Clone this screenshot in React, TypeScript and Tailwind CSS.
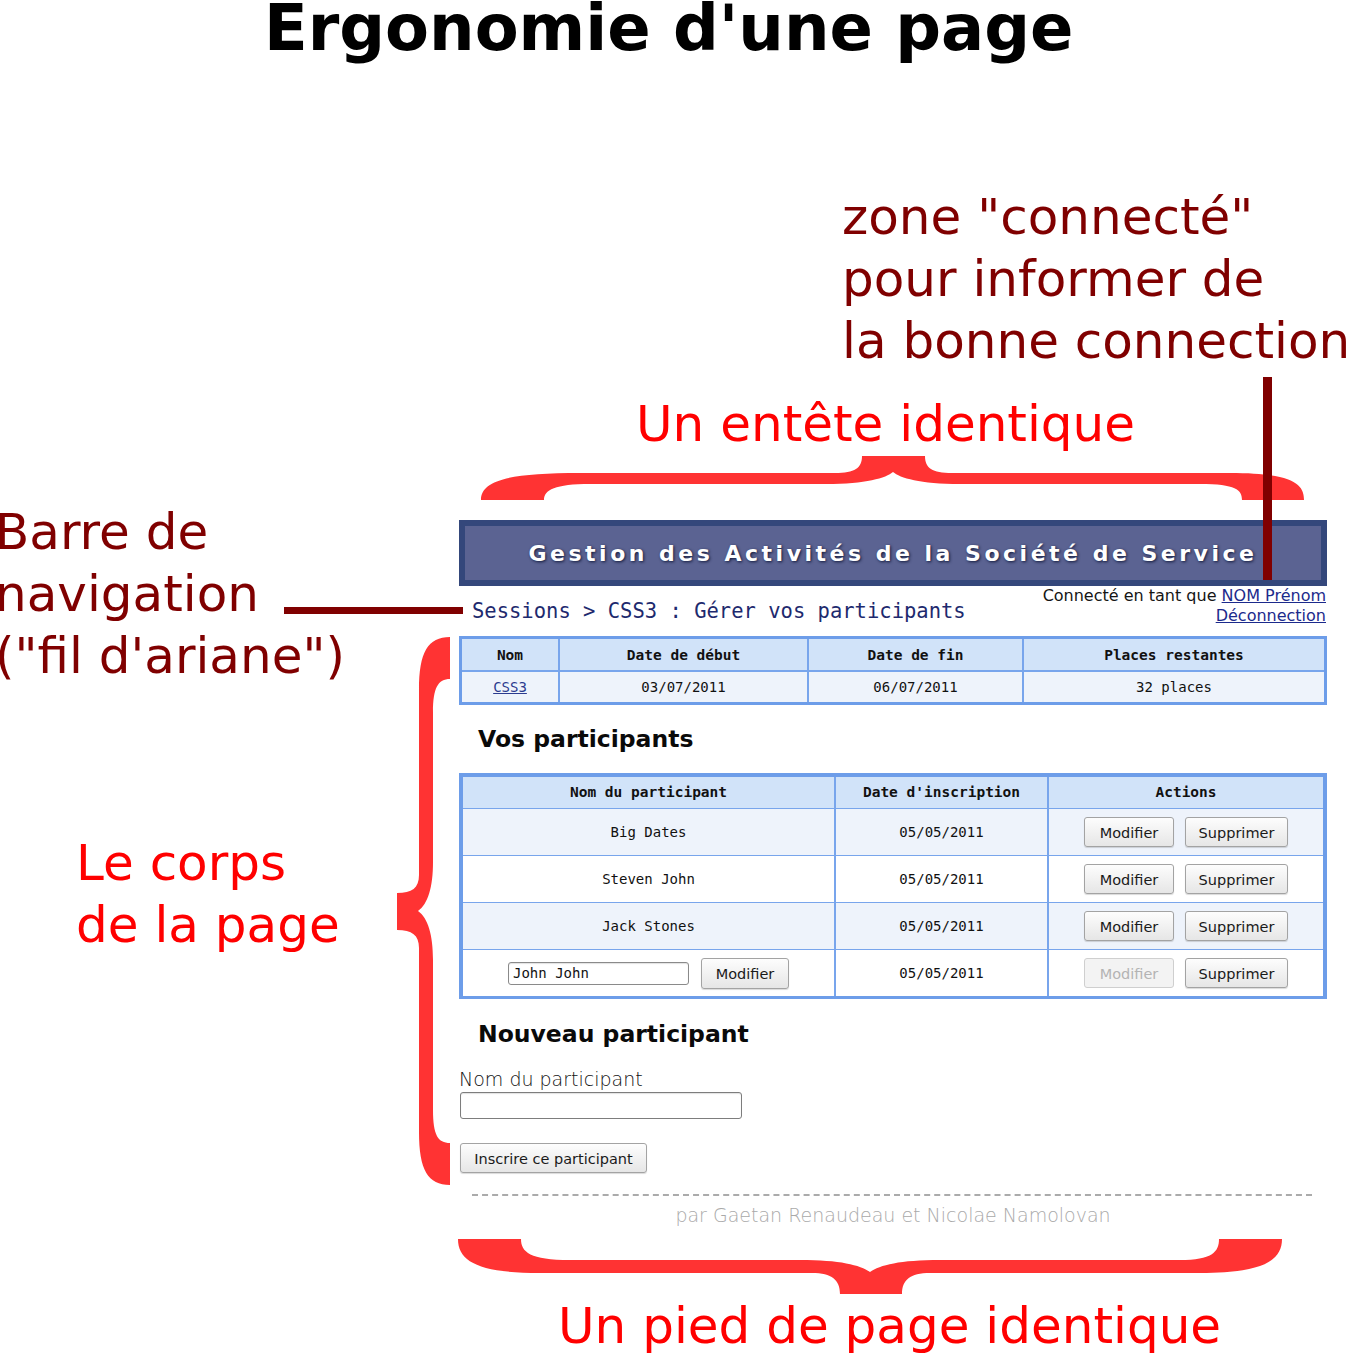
import React from 'react'

function Btn({
  children,
  disabled,
  className = '',
}: {
  children: React.ReactNode
  disabled?: boolean
  className?: string
}) {
  return (
    <button
      className={`flex items-center justify-center rounded-[3px] border font-['DejaVu_Sans',sans-serif] text-[14.5px] leading-none pt-[2px] ${
        disabled
          ? 'border-[#cfcfcf] bg-[#f3f3f3] text-[#b4b4b4]'
          : 'border-[#a3a3a3] bg-gradient-to-b from-[#fdfdfd] to-[#e6e6e6] text-[#1a1a1a] shadow-[0_1px_1px_rgba(0,0,0,0.15)]'
      } ${className}`}
    >
      {children}
    </button>
  )
}

const participants = [
  { name: 'Big Dates', date: '05/05/2011', bg: 'bg-[#eef3fb]' },
  { name: 'Steven John', date: '05/05/2011', bg: 'bg-white' },
  { name: 'Jack Stones', date: '05/05/2011', bg: 'bg-[#eef3fb]' },
]

function PageMockup() {
  return (
    <div className="absolute left-[459px] top-[520px] w-[868px] flex flex-col">
      {/* Header */}
      <div className="h-[66px] border-[6px] border-[#34477b] bg-[#5b6392] flex items-center justify-center">
        <span className="font-['DejaVu_Sans',sans-serif] font-bold text-[22px] leading-none tracking-[3.5px] text-white [text-shadow:1px_1px_3px_#10183a] pt-[1px]">
          Gestion des Activités de la Société de Service
        </span>
      </div>

      {/* Breadcrumb + connected zone */}
      <div className="h-[50px] flex justify-between items-start">
        <div className="pl-[13px] pt-[13px] font-['DejaVu_Sans_Mono',monospace] text-[20.5px] leading-[24px] text-[#1e2a6e]">
          Sessions &gt; CSS3 : Gérer vos participants
        </div>
        <div className="pr-[1px] text-right font-['DejaVu_Sans',sans-serif] text-[16px] leading-[20px] text-[#151515]">
          <div>
            Connecté en tant que <span className="underline text-[#1c2a8c]">NOM Prénom</span>
          </div>
          <div className="underline text-[#1c2a8c]">Déconnection</div>
        </div>
      </div>

      {/* Session table */}
      <div className="grid grid-cols-[96px_247px_213px_1fr] gap-[2px] border-[3px] border-[#6d9de9] bg-[#78a5ec] font-['DejaVu_Sans_Mono',monospace] text-[14px] text-[#111]">
        {['Nom', 'Date de début', 'Date de fin', 'Places restantes'].map((h) => (
          <div key={h} className="h-[31px] bg-[#d1e3f9] flex items-center justify-center font-bold text-[14.5px] pt-[2px]">
            {h}
          </div>
        ))}
        <div className="h-[30px] bg-[#eef3fb] flex items-center justify-center">
          <span className="underline text-[#2b3b8f]">CSS3</span>
        </div>
        <div className="h-[30px] bg-[#eef3fb] flex items-center justify-center">03/07/2011</div>
        <div className="h-[30px] bg-[#eef3fb] flex items-center justify-center">06/07/2011</div>
        <div className="h-[30px] bg-[#eef3fb] flex items-center justify-center">32 places</div>
      </div>

      {/* Vos participants */}
      <h2 className="mt-[20px] pl-[19px] font-['DejaVu_Sans',sans-serif] font-bold text-[23.5px] leading-[28px] text-[#0a0a0a]">
        Vos participants
      </h2>

      <div className="mt-[20px] grid grid-cols-[371px_211px_1fr] gap-x-[2px] gap-y-[1px] border-x-4 border-t-4 border-b-[3px] border-[#6d9de9] bg-[#78a5ec] font-['DejaVu_Sans_Mono',monospace] text-[14px] text-[#111]">
        {['Nom du participant', "Date d'inscription", 'Actions'].map((h) => (
          <div key={h} className="h-[31px] bg-[#d1e3f9] flex items-center justify-center font-bold text-[14.5px] pt-[1px]">
            {h}
          </div>
        ))}
        {participants.map((p) => (
          <React.Fragment key={p.name}>
            <div className={`h-[46px] ${p.bg} flex items-center justify-center`}>{p.name}</div>
            <div className={`h-[46px] ${p.bg} flex items-center justify-center`}>{p.date}</div>
            <div className={`h-[46px] ${p.bg} flex items-center justify-center gap-[11px]`}>
              <Btn className="w-[90px] h-[30px]">Modifier</Btn>
              <Btn className="w-[103px] h-[30px]">Supprimer</Btn>
            </div>
          </React.Fragment>
        ))}
        <div className="h-[46px] bg-white flex items-center justify-center gap-[12px]">
          <div className="w-[181px] h-[23px] rounded-[3px] border border-[#8a8a8a] bg-white pl-[4px] flex items-center shadow-[inset_0_1px_1px_rgba(0,0,0,0.12)]">
            John John
          </div>
          <Btn className="w-[88px] h-[31px]">Modifier</Btn>
        </div>
        <div className="h-[46px] bg-white flex items-center justify-center">05/05/2011</div>
        <div className="h-[46px] bg-white flex items-center justify-center gap-[11px]">
          <Btn disabled className="w-[90px] h-[30px]">
            Modifier
          </Btn>
          <Btn className="w-[103px] h-[30px]">Supprimer</Btn>
        </div>
      </div>

      {/* Nouveau participant */}
      <h2 className="mt-[21px] pl-[19px] font-['DejaVu_Sans',sans-serif] font-bold text-[23.5px] leading-[28px] text-[#0a0a0a]">
        Nouveau participant
      </h2>
      <label className="mt-[20px] font-['DejaVu_Sans',sans-serif] font-extralight text-[19px] leading-[22px] text-[#111]">
        Nom du participant
      </label>
      <div className="mt-[2px] ml-[1px] w-[282px] h-[27px] rounded-[3px] border border-[#7d7d7d] bg-white shadow-[inset_0_1px_1px_rgba(0,0,0,0.12)]" />
      <Btn className="mt-[24px] ml-[1px] w-[187px] h-[30px]">Inscrire ce participant</Btn>

      {/* Footer */}
      <div className="mt-[21px] ml-[13px] mr-[15px] border-t-2 border-dashed border-[#ababab]" />
      <div className="mt-[8px] text-center font-['DejaVu_Sans',sans-serif] font-extralight text-[19px] leading-[22px] text-[#a9a9a9]">
        par Gaetan Renaudeau et Nicolae Namolovan
      </div>
    </div>
  )
}

function Annotations() {
  return (
    <svg className="absolute inset-0 pointer-events-none" width="1346" height="1353" viewBox="0 0 1346 1353">
      {/* top brace */}
      <path
        fill="#ff3333"
        d="M481,500 C481,480 510,473 580,473 L835,473 C855,473 862,468 862,456 L925,456 C925,468 932,473 952,473 L1230,473 C1295,473 1304,485 1304,500 L1242,500 C1242,490 1236,484 1200,484 L960,484 C920,484 900,478 893,472 C886,478 866,484 826,484 L590,484 C555,484 544,490 544,500 Z"
      />
      {/* left brace */}
      <path
        fill="#ff3333"
        d="M450,637 C428,637 419,652 419,690 L419,875 C419,888 412,893 397,893 L397,930 C412,930 419,935 419,948 L419,1132 C419,1170 428,1185 450,1185 L450,1143 C438,1143 433,1135 433,1110 L433,960 C433,935 428,918 418,911 C428,904 433,887 433,862 L433,712 C433,688 438,679 450,679 Z"
      />
      {/* bottom brace */}
      <path
        fill="#ff3333"
        d="M458,1239 L521,1239 C521,1252 530,1260 570,1260 L800,1260 C840,1260 860,1265 870,1272 C880,1265 900,1260 940,1260 L1180,1260 C1212,1260 1219,1252 1219,1239 L1282,1239 C1282,1262 1260,1273 1200,1273 L930,1273 C910,1273 902,1280 902,1294 L840,1294 C840,1280 832,1273 812,1273 L540,1273 C480,1273 458,1262 458,1239 Z"
      />
      {/* dark red pointers */}
      <rect x="1263" y="377" width="9" height="203" fill="#800000" />
      <rect x="284" y="607" width="179" height="7" fill="#800000" />
    </svg>
  )
}

export default function App() {
  return (
    <div className="relative w-[1346px] h-[1353px] bg-white overflow-hidden font-['DejaVu_Sans',sans-serif]">
      <h1 className="absolute left-[264px] top-[-4px] font-bold text-[64px] leading-[64px] text-black whitespace-nowrap">
        Ergonomie d'une page
      </h1>

      <div className="absolute left-[842px] top-[186px] text-[50px] leading-[62px] text-[#800000] whitespace-nowrap">
        <div>zone "connecté"</div>
        <div>pour informer de</div>
        <div>la bonne connection</div>
      </div>

      <div className="absolute left-[636px] top-[393px] text-[50px] leading-[62px] text-[#ff0000] whitespace-nowrap">
        Un entête identique
      </div>

      <div className="absolute left-[-5px] top-[501px] text-[50px] leading-[62px] text-[#800000] whitespace-nowrap">
        <div>Barre de</div>
        <div>navigation</div>
        <div>("fil d'ariane")</div>
      </div>

      <div className="absolute left-[76px] top-[832px] text-[50px] leading-[62px] text-[#ff0000] whitespace-nowrap">
        <div>Le corps</div>
        <div>de la page</div>
      </div>

      <div className="absolute left-[558px] top-[1295px] text-[50px] leading-[62px] text-[#ff0000] whitespace-nowrap">
        Un pied de page identique
      </div>

      <PageMockup />
      <Annotations />
    </div>
  )
}
